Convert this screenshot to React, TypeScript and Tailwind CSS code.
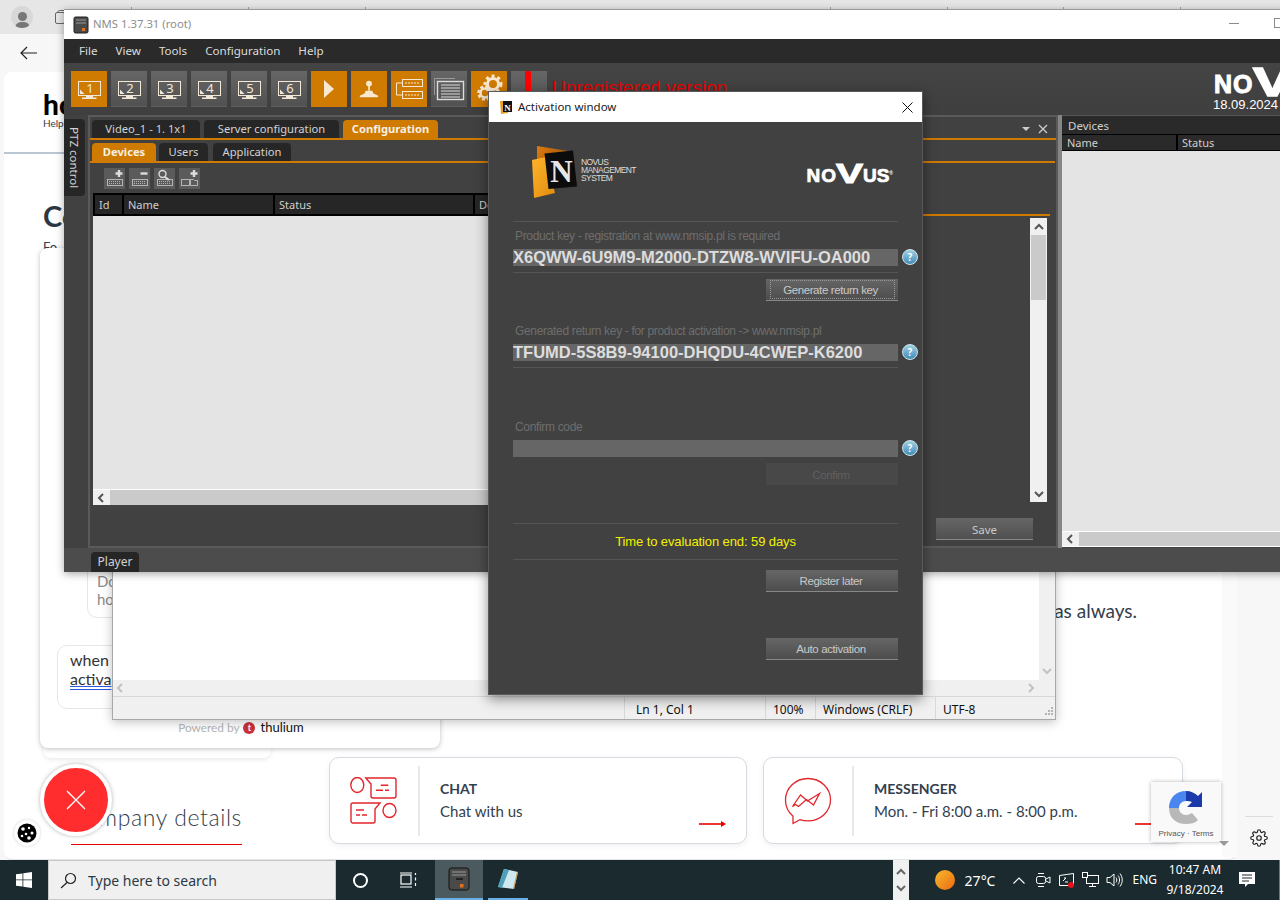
import React from "react";

const QT = "font-['Noto_Sans','Open_Sans',sans-serif]";
const ARIAL = "font-['Liberation_Sans',Arial,sans-serif]";
const PAGE = "font-['Lato','Open_Sans',sans-serif]";

function MonitorIcon({ n }: { n: number }) {
  return (
    <svg width="36" height="36" viewBox="0 0 36 36">
      <rect x="7.5" y="10.5" width="22" height="14" fill="none" stroke="#f2e8d8" strokeWidth="1" />
      <path d="M9 23V18.5L13.5 23Z" fill="#f2e8d8" />
      <path d="M15 25h7v1.500h3.500V28H11v-1.500h4Z" fill="#f2e8d8" />
      <text x="19" y="22" fontSize="13" textAnchor="middle" fill="#f2e8d8" fontFamily="Noto Sans, sans-serif">{n}</text>
    </svg>
  );
}

function ToolBtn({ orange, children }: { orange?: boolean; children: React.ReactNode }) {
  return (
    <div
      className={
        orange
          ? "w-9 h-9 shrink-0 bg-[#cf7a00] flex items-center justify-center"
          : "w-9 h-9 shrink-0 bg-linear-to-b from-[#666666] to-[#515151] border-b border-[#5d5d5d] flex items-center justify-center"
      }
    >
      {children}
    </div>
  );
}

function NovusLogo({ big }: { big?: boolean }) {
  const word = big
    ? "text-[25px] leading-[22px] mb-[2px] [-webkit-text-stroke:1px_white]"
    : "text-[19px] leading-[15px] mb-[2px] [-webkit-text-stroke:0.7px_white]";
  const v = big
    ? "text-[40px] leading-[30px] inline-block scale-x-[1.45] origin-left w-[38px] -ml-[1px] [-webkit-text-stroke:1.5px_white]"
    : "text-[28px] leading-[22px] inline-block scale-x-[1.45] origin-left w-[27px] -ml-[1px] [-webkit-text-stroke:1px_white]";
  return (
    <div className={`flex items-end font-bold text-white ${ARIAL}`}>
      <span className={`${word} tracking-[1px]`}>NO</span>
      <span className={v}>V</span>
      {!big && <span className={word}>US</span>}
      {!big && <span className="text-[5px] leading-[20px] self-start">®</span>}
    </div>
  );
}

function Tab({ active, w, children }: { active?: boolean; w: string; children: React.ReactNode }) {
  return (
    <div
      className={`${w} h-[18px] rounded-t-[4px] flex items-center justify-center text-[11.2px] leading-none ${QT} ${
        active ? "bg-[#cf7a00] text-[#f6f0e4] font-bold" : "bg-[#262626] text-[#d2d2d2]"
      }`}
    >
      {children}
    </div>
  );
}

function SmallTool({ kind }: { kind: "add" | "remove" | "search" | "folder" }) {
  return (
    <div className="w-[21px] h-[21px] bg-[#5b5b5b] flex items-center justify-center">
      <svg width="21" height="21" viewBox="0 0 21 21" fill="none" stroke="#b4b4b4">
        {kind === "folder" ? (
          <>
            <rect x="2.5" y="11.5" width="8" height="6" />
            <path d="M11.5 17.5v-6h3l1 1h3v5Z" />
            <path d="M15 2v7M11.5 5.5h7" strokeWidth="2.4" stroke="#dddddd" />
          </>
        ) : (
          <>
            <rect x="3.5" y="11.5" width="15" height="6" />
            <path d="M5 13.5h12M5 15.5h12" strokeDasharray="1 1" />
            {kind === "add" && <path d="M15 2v7M11.5 5.5h7" strokeWidth="2.4" stroke="#dddddd" />}
            {kind === "remove" && <path d="M11.5 5.5h7" strokeWidth="2.4" stroke="#dddddd" />}
            {kind === "search" && (
              <>
                <circle cx="8.5" cy="6" r="3.5" strokeWidth="1.4" stroke="#dddddd" />
                <path d="M11 9l4 3" strokeWidth="2" stroke="#dddddd" />
              </>
            )}
          </>
        )}
      </svg>
    </div>
  );
}

function Chevron({ d, color = "#555555" }: { d: "l" | "r" | "u" | "d"; color?: string }) {
  const p = { l: "M7 2L3 6l4 4", r: "M4 2l4 4-4 4", u: "M2 8l4-4 4 4", d: "M2 4l4 4 4-4" }[d];
  return (
    <svg width="12" height="12" viewBox="0 0 12 12" fill="none" stroke={color} strokeWidth="2">
      <path d={p} />
    </svg>
  );
}

function HeadCell({ w, children }: { w: string; children?: React.ReactNode }) {
  return <div className={`${w} h-full shrink-0 border-r-2 border-black pl-1 pt-[2px] flex items-center text-[11px] text-[#cfcfcf] ${QT}`}>{children}</div>;
}

function Help() {
  return (
    <div className="absolute -right-[20px] top-[0px] w-4 h-4 rounded-full bg-linear-to-b from-[#9dd0e6] to-[#3f8db8] border border-[#cfe6f0] flex items-center justify-center text-white text-[10px] font-bold leading-none">
      ?
    </div>
  );
}

function KeyField({ value }: { value?: string }) {
  return (
    <div className="relative h-[17px] bg-[#666666] flex items-center">
      <span className={`${ARIAL} font-bold text-[16.5px] leading-none text-[#dddddd] whitespace-nowrap`}>{value}</span>
      <Help />
    </div>
  );
}

function DlgBtn({ children, dim, dotted }: { children: React.ReactNode; dim?: boolean; dotted?: boolean }) {
  return (
    <div
      className={`ml-auto w-[132px] h-[22px] flex items-center justify-center text-[11.5px] tracking-[-0.4px] ${dotted ? "" : "pt-[3px] pr-[2px]"} ${ARIAL} ${
        dim
          ? "bg-[#484848] text-[#5f5f5f]"
          : "bg-linear-to-b from-[#666666] to-[#4d4d4d] border-b border-[#888888] text-[#c9c9c9]"
      }`}
    >
      <div className={dotted ? "w-[125px] h-[19px] pt-[3px] pr-[3px] border border-dotted border-[#999999] flex items-center justify-center" : ""}>{children}</div>
    </div>
  );
}

function Sep({ className = "" }: { className?: string }) {
  return <div className={`h-px bg-[#555555] ${className}`} />;
}

function ChatIcon() {
  return (
    <svg width="48" height="48" viewBox="0 0 48 48" fill="none" stroke="#e2262b" strokeWidth="1.4">
      <ellipse cx="7.300" cy="8" rx="6.500" ry="7.500" />
      <path d="M5 7h.01M9.500 7h.01" strokeWidth="2" />
      <path d="M15.700 1H44a2 2 0 0 1 2 2V19a2 2 0 0 1-2 2H23a2 2 0 0 1-2-2V7Z" />
      <path d="M30.700 8.300h7.600M26 13.300h7M35 13.300h4" />
      <path d="M3 26H30L25 32V44a2 2 0 0 1-2 2H3a2 2 0 0 1-2-2V28a2 2 0 0 1 2-2Z" />
      <path d="M6 33h8M6 38h4M12 38h5" />
      <ellipse cx="39.500" cy="33.500" rx="6.500" ry="7" />
      <path d="M37 33h.01M42 33h.01" strokeWidth="2" />
    </svg>
  );
}

function MessengerIcon() {
  return (
    <svg width="48" height="48" viewBox="0 0 48 48" fill="none" stroke="#e2262b" strokeWidth="1.3">
      <path d="M24 1.500C11.500 1.500 1.500 11 1.500 23c0 6.500 2.800 12.200 7.500 16.200V46.500l7-3.800c2.500.8 5 1.200 8 1.200 12.500 0 22.500-9.500 22.500-21.200S36.500 1.500 24 1.500Z" />
      <path d="M8.500 29.500L16.500 18l7 6 12-7.500-6 11.500-7-5.500-8 7-3-2Z" />
    </svg>
  );
}

function RedArrow() {
  return (
    <svg width="28" height="8" viewBox="0 0 28 8" className="shrink-0">
      <path d="M0 4h23" stroke="#e60000" strokeWidth="1.6" />
      <path d="M22 1l5 3-5 3Z" fill="#e60000" />
    </svg>
  );
}

function ContactCard({ icon, title, sub, w }: { icon: React.ReactNode; title: string; sub: string; w: string }) {
  return (
    <div className={`${w} h-[87px] shrink-0 bg-white border border-[#d5dbe1] rounded-[10px] shadow-[0_2px_6px_rgba(0,0,0,0.06)] flex items-center relative`}>
      <div className="w-[88px] flex justify-center">{icon}</div>
      <div className="w-[2px] h-[70px] bg-[#e4e9ee]" />
      <div className={`pl-[20px] mb-[2px] ${PAGE} text-[#34404d]`}>
        <div className="text-[14px] font-bold leading-[18px]">{title}</div>
        <div className="text-[15px] leading-[18px] mt-[4px] whitespace-nowrap">{sub}</div>
      </div>
      <div className="absolute right-[19px] bottom-[15px]">
        <RedArrow />
      </div>
    </div>
  );
}

function Page() {
  const ticks = [131, 248, 365, 830, 947, 1063, 1180];
  return (
    <div className="w-full h-[860px] flex flex-col bg-[#f7f7f7]">
      <div className="h-[34px] bg-[#e6e6e6] flex items-center pl-[11px] gap-[21px] shrink-0 relative">
        <div className="w-[22px] h-[22px] rounded-full bg-[#d8d8d8] flex flex-col items-center justify-end overflow-hidden">
          <div className="w-[9px] h-[9px] rounded-full bg-[#777777] mb-[1px]" />
          <div className="w-[15px] h-[6px] rounded-t-full bg-[#777777]" />
        </div>
        <svg width="16" height="16" viewBox="0 0 16 16" fill="none" stroke="#666666">
          <rect x="1.500" y="3.500" width="9" height="11" rx="1.500" />
          <path d="M4 3c0-1 .5-1.500 1.500-1.500h8v11" />
        </svg>
        {ticks.map((x) => (
          <div key={x} className="absolute top-[7px] w-px h-[2px] bg-[#a0a0a0]" style={{ left: x }} />
        ))}
      </div>
      <div className="h-[38px] flex items-center pl-[20px] shrink-0">
        <svg width="17" height="14" viewBox="0 0 17 14" fill="none" stroke="#222222" strokeWidth="1.2">
          <path d="M17 7H1M7 1L1 7l6 6" />
        </svg>
      </div>
      <div className="flex-1 flex min-h-0">
        <div className="ml-[4px] w-[1233px] bg-white rounded-[8px] border-r border-b border-[#e4e4e4] flex flex-col">
          <div className="h-[82px] shrink-0 border-b-2 border-[#bac6d2] pl-[39px] pt-[18px] text-black">
            <div className={`${PAGE} text-[28px] font-black leading-[28px]`}>ho</div>
            <div className={`${PAGE} text-[10px] leading-[10px] text-[#34404d]`}>Help</div>
          </div>
          <div className={`pl-[39px] pt-[42px] ${PAGE} text-[#2c3744] text-[29px] font-bold leading-[40px]`}>Co</div>
          <div className={`pl-[39px] mt-[3px] text-[13px] ${PAGE} text-[#34404d] leading-[16px]`}>Fo</div>
          <div className={`mt-[345px] text-right pr-[99px] text-[19px] leading-[22px] ${PAGE} text-[#34404d]`}>as always.</div>
          <div className="flex items-start mt-[135px] pl-[67px]">
            <div className="w-[258px] h-[88px] flex flex-col items-end justify-end">
              <div className={`w-[171px] flex justify-end whitespace-nowrap border-b border-[#e60000] pb-[11px] ${PAGE} font-light tracking-[0.6px] text-[23px] leading-[32px] text-[#34404d] mr-[87px]`}>
                Company details
              </div>
            </div>
            <ContactCard w="w-[418px]" icon={<ChatIcon />} title="CHAT" sub="Chat with us" />
            <div className="w-[16px] shrink-0" />
            <ContactCard w="w-[420px]" icon={<MessengerIcon />} title="MESSENGER" sub="Mon. - Fri 8:00 a.m. - 8:00 p.m." />
          </div>
        </div>
        <div className="flex-1 flex flex-col items-center justify-end pb-[13px]">
          <div className="w-[28px] h-px bg-[#dddddd] mb-[12px]" />
          <svg width="18" height="18" viewBox="0 0 24 24" fill="none" stroke="#222222" strokeWidth="1.6">
            <circle cx="12" cy="12" r="3" />
            <path d="M19.400 15a1.650 1.650 0 0 0 .33 1.820l.06.06a2 2 0 1 1-2.830 2.830l-.06-.06a1.650 1.650 0 0 0-2.820 1.170V21a2 2 0 1 1-4 0v-.09A1.650 1.650 0 0 0 7.270 19.700l-.06.06a2 2 0 1 1-2.830-2.830l.06-.06A1.650 1.650 0 0 0 3.260 14H3a2 2 0 1 1 0-4h.09A1.650 1.650 0 0 0 4.300 7.270l-.06-.06a2 2 0 1 1 2.830-2.830l.06.06A1.650 1.650 0 0 0 10 3.260V3a2 2 0 1 1 4 0v.09a1.650 1.650 0 0 0 2.820 1.170l.06-.06a2 2 0 1 1 2.830 2.830l-.06.06A1.650 1.650 0 0 0 20.740 10H21a2 2 0 1 1 0 4h-.09a1.650 1.650 0 0 0-1.510 1Z" />
          </svg>
        </div>
      </div>
    </div>
  );
}

function ChatWidget() {
  return (
    <>
      <div className="absolute left-[43px] top-[700px] w-[228px] h-[58px] bg-white rounded-b-[8px] shadow-[0_2px_4px_rgba(0,0,0,0.08)]" />
      <div className={`absolute left-[40px] top-[248px] w-[400px] h-[500px] bg-white rounded-[8px] shadow-[0_1px_5px_rgba(0,0,0,0.25)] flex flex-col items-start pl-[17px] ${PAGE}`}>
        <div className="mt-[300px] ml-[30px] w-[200px] h-[70px] border border-[#e6e6e6] rounded-[10px] flex flex-col justify-end pl-[9px] pb-[9px] text-[15px] leading-[18px] text-[#8a8a8a]">
          <div>Do</div>
          <div>ho</div>
        </div>
        <div className="mt-[27px] w-[300px] h-[64px] border border-[#e6e6e6] rounded-[10px] pl-[12px] pt-[4px] text-[16px] leading-[19px] text-[#333333]">
          <div>when</div>
          <div className="underline decoration-double decoration-[#2a56e0]">activa</div>
        </div>
        <div className="mt-[9px] self-center flex items-center gap-[4px] -ml-[15px]">
          <span className="text-[11.8px] text-[#b5b5b5]">Powered by</span>
          <span className="w-3 h-3 rounded-full bg-[#c9303a] text-white text-[9px] font-bold flex items-center justify-center">t</span>
          <span className="ml-[1px] text-[13px] text-[#111111]">thulium</span>
        </div>
      </div>
      <div className="absolute left-[40px] top-[764px] w-[72px] h-[72px] rounded-full bg-[#ff2d2d] border-[4px] border-white shadow-[0_0_4px_rgba(0,0,0,0.3)] flex items-center justify-center">
        <svg width="20" height="20" viewBox="0 0 20 20" stroke="white" strokeWidth="1.400">
          <path d="M1 1l18 18M19 1L1 19" />
        </svg>
      </div>
      <div className="absolute left-[14px] top-[820px] w-[26px] h-[26px] rounded-full bg-white shadow-[0_0_3px_rgba(0,0,0,0.2)] flex items-center justify-center">
        <svg width="20" height="20" viewBox="0 0 20 20">
          <circle cx="10" cy="10" r="9.500" fill="#000000" />
          <circle cx="6" cy="6" r="1.800" fill="white" />
          <circle cx="12" cy="5" r="1.200" fill="white" />
          <circle cx="15" cy="10" r="1.500" fill="white" />
          <circle cx="9" cy="11" r="1.300" fill="white" />
          <circle cx="5" cy="13" r="1.300" fill="white" />
          <circle cx="12" cy="15" r="1.800" fill="white" />
        </svg>
      </div>
      <div className={`absolute left-[1151px] top-[782px] w-[70px] h-[60px] bg-[#f9f9f9] shadow-[0_0_4px_rgba(0,0,0,0.3)] flex flex-col items-center ${ARIAL}`}>
        <svg width="38" height="38" viewBox="0 0 38 38" className="mt-[6px] shrink-0">
          <path d="M2 20C2 10 9 3 19 3v10c-4 0-7 3-7 7H2Z" fill="#4a85f0" />
          <path d="M19 3c5 0 9 2 12 5l4-4v15H20l5-5c-2-1-4-1-6-1V3Z" fill="#1c3aa9" />
          <path d="M2 20h10c0 4 3 7 7 7 2 0 4-1 6-2l6 7c-3 3-7 4-12 4C9 36 2 30 2 20Z" fill="#b8b8b8" />
        </svg>
        <div className="text-[8px] leading-[10px] text-[#555555] whitespace-nowrap mt-[3px]">Privacy · Terms</div>
      </div>
      <div className="absolute left-[1219px] top-[841px] w-0 h-0 border-l-[5px] border-r-[5px] border-t-[5px] border-l-transparent border-r-transparent border-t-[#999999]" />
    </>
  );
}

function Notepad() {
  const seg = "h-full border-l border-[#d8d8d8] pt-[4px] flex items-center shrink-0";
  return (
    <div className={`absolute left-[112px] top-[480px] w-[944px] h-[240px] bg-white border border-[#a8a8a8] shadow-[0_2px_10px_rgba(0,0,0,0.25)] flex flex-col text-[12px] text-[#111111] ${QT}`}>
      <div className="flex-1 flex min-h-0">
        <div className="flex-1" />
        <div className="w-4 bg-[#f0f0f0] flex flex-col justify-end items-center pb-[3px]">
          <Chevron d="d" color="#c2c2c2" />
        </div>
      </div>
      <div className="h-4 bg-[#f0f0f0] flex items-center justify-between pl-[2px] pr-[18px] shrink-0">
        <Chevron d="l" color="#c2c2c2" />
        <Chevron d="r" color="#c2c2c2" />
      </div>
      <div className="h-[23px] bg-[#f0f0f0] border-t border-[#d8d8d8] flex items-center shrink-0 pl-[511px] relative">
        <div className={`${seg} w-[141px] pl-[11px]`}>Ln 1, Col 1</div>
        <div className={`${seg} w-[50px] pl-[7px]`}>100%</div>
        <div className={`${seg} w-[120px] pl-[7px]`}>Windows (CRLF)</div>
        <div className={`${seg} pl-[7px]`}>UTF-8</div>
        <svg width="12" height="12" viewBox="0 0 12 12" className="absolute right-[1px] bottom-[1px]" fill="#b5b5b5">
          <rect x="9" y="1" width="2" height="2" />
          <rect x="6" y="4" width="2" height="2" />
          <rect x="9" y="4" width="2" height="2" />
          <rect x="3" y="7" width="2" height="2" />
          <rect x="6" y="7" width="2" height="2" />
          <rect x="9" y="7" width="2" height="2" />
        </svg>
      </div>
    </div>
  );
}

function NmsWindow() {
  const menuItems = ["File", "View", "Tools", "Configuration", "Help"];
  return (
    <div className="absolute left-[64px] top-[9px] w-[1240px] h-[563px] flex flex-col border-t border-[#9a9a9a] shadow-[0_2px_8px_rgba(0,0,0,0.35)] overflow-hidden bg-[#414141]">
      <div className="h-[29px] shrink-0 bg-white flex items-center relative pl-[9px]">
        <svg width="16" height="18" viewBox="0 0 16 18">
          <rect x="1" y="1" width="14" height="16" rx="1.500" fill="#4a4a4a" stroke="#1f1f1f" />
          <path d="M3 4h10M3 7h10" stroke="#9a9a9a" />
          <rect x="9" y="12" width="3" height="3" fill="#e8701a" />
        </svg>
        <span className={`ml-[4px] text-[11.3px] text-[#8d8d8d] ${QT}`}>NMS 1.37.31 (root)</span>
        <div className="absolute left-[1165px] top-[13px] w-[10px] h-px bg-[#8a8a8a]" />
        <div className="absolute left-[1210px] top-[8px] w-[10px] h-[10px] border border-[#8a8a8a]" />
      </div>
      <div className={`h-[24px] shrink-0 bg-[#2a2a2a] flex items-center pl-[15px] gap-[18px] text-[11.6px] text-[#dcdcdc] ${QT}`}>
        {menuItems.map((m) => (
          <span key={m}>{m}</span>
        ))}
      </div>
      <div className="h-[52px] shrink-0 bg-linear-to-b from-[#444444] to-[#3f3f3f] flex pl-[7px] pt-[8px] gap-[4px] relative">
        {[1, 2, 3, 4, 5, 6].map((n) => (
          <ToolBtn key={n} orange={n === 1}>
            <MonitorIcon n={n} />
          </ToolBtn>
        ))}
        <ToolBtn orange>
          <svg width="12" height="18" viewBox="0 0 12 18">
            <path d="M1 0l10 9-10 9Z" fill="#f8e8d0" />
          </svg>
        </ToolBtn>
        <ToolBtn orange>
          <svg width="20" height="20" viewBox="0 0 24 24" fill="#f8e8d0">
            <circle cx="12" cy="5.500" r="3.500" />
            <rect x="11" y="8" width="2" height="6" />
            <path d="M8 14h8l1 3 6 3v2H1v-2l6-3Z" />
          </svg>
        </ToolBtn>
        <ToolBtn orange>
          <svg width="28" height="24" viewBox="0 0 28 24" fill="none" stroke="#f8e8d0">
            <rect x="7.500" y="2.500" width="20" height="7" />
            <rect x="7.500" y="14.500" width="20" height="7" />
            <path d="M7.500 6H1.500V18H7.500" />
            <path d="M10 6h15M10 18h15" strokeDasharray="2 1" />
          </svg>
        </ToolBtn>
        <ToolBtn>
          <svg width="32" height="26" viewBox="0 0 32 26" fill="none" stroke="#dcdcdc">
            <path d="M1.500 19V2.500H22" stroke="#9a9a9a" />
            <rect x="4.500" y="5.500" width="26" height="18" strokeWidth="1.400" />
            <path d="M8 9h19M8 12h19M8 15h19M8 18h19M8 21h19" />
          </svg>
        </ToolBtn>
        <ToolBtn orange>
          <svg width="36" height="36" viewBox="0 0 36 36" fill="none" stroke="#f8e8d0">
            <circle cx="22" cy="13" r="8" strokeWidth="3" strokeDasharray="3 3" />
            <circle cx="22" cy="13" r="5.500" strokeWidth="3" />
            <circle cx="14" cy="22" r="6.500" strokeWidth="2.500" strokeDasharray="3 2" />
            <circle cx="14" cy="22" r="4.500" strokeWidth="2.500" />
          </svg>
        </ToolBtn>
        <ToolBtn>
          <div className="w-[6px] h-[30px] bg-[#ff0000] rounded-t-[2px] -mt-[6px] mr-[3px]" />
        </ToolBtn>
        <span className={`self-start ml-[1px] mt-[5px] text-[19px] leading-[24px] text-[#e50000] ${ARIAL}`}>Unregistered version</span>
        <div className="absolute left-[1150px] top-[4px] flex flex-col items-start">
          <NovusLogo big />
          <div className={`text-[13px] leading-[15px] text-white -ml-[1px] ${ARIAL}`}>18.09.2024</div>
        </div>
      </div>
      <div className="h-[433px] shrink-0 flex">
        <div className="w-[24px] shrink-0 pt-[4px]">
          <div className="w-[21px] h-[77px] bg-[#262626] rounded-r-[4px] flex items-center justify-center">
            <span className={`text-[11.5px] text-[#d2d2d2] whitespace-nowrap rotate-90 ${QT}`}>PTZ control</span>
          </div>
        </div>
        <div className="w-[970px] shrink-0 border-2 border-[#5a5a5a] flex flex-col">
          <div className="flex items-center gap-[4px] pl-[2px] pt-[3px]">
            <Tab w="w-[108px]">Video_1 - 1. 1x1</Tab>
            <Tab w="w-[135px]">Server configuration</Tab>
            <Tab w="w-[95px]" active>Configuration</Tab>
            <div className="ml-auto flex items-center gap-[8px] pr-[8px]">
              <div className="w-0 h-0 border-l-[4px] border-r-[4px] border-t-[4px] border-l-transparent border-r-transparent border-t-[#cccccc]" />
              <svg width="10" height="10" viewBox="0 0 10 10" stroke="#cccccc" strokeWidth="1.300">
                <path d="M1 1l8 8M9 1L1 9" />
              </svg>
            </div>
          </div>
          <div className="h-[2px] bg-[#cf7a00] shrink-0" />
          <div className="flex gap-[3px] pl-[2px] pt-[3px]">
            <Tab w="w-[64px]" active>Devices</Tab>
            <Tab w="w-[49px]">Users</Tab>
            <div className="ml-[2px]">
              <Tab w="w-[78px]">Application</Tab>
            </div>
          </div>
          <div className="h-[2px] bg-[#cf7a00] shrink-0 mr-[1px]" />
          <div className="flex gap-[4px] pl-[14px] pt-[5px]">
            <SmallTool kind="add" />
            <SmallTool kind="remove" />
            <SmallTool kind="search" />
            <SmallTool kind="folder" />
          </div>
          <div className="flex pl-[3px] pt-[4px]">
            <div className="w-[395px] h-[312px] shrink-0 flex flex-col">
              <div className="h-[23px] shrink-0 bg-[#262626] border-y-2 border-black border-l-2 flex">
                <HeadCell w="w-[29px]">Id</HeadCell>
                <HeadCell w="w-[151px]">Name</HeadCell>
                <HeadCell w="w-[200px]">Status</HeadCell>
                <HeadCell w="w-[40px]">De</HeadCell>
              </div>
              <div className="flex-1 bg-[#e4e4e4]" />
              <div className="h-[16px] shrink-0 bg-[#f0f0f0] border-t border-white flex">
                <div className="w-[17px] flex items-center justify-center">
                  <Chevron d="l" />
                </div>
                <div className="flex-1 bg-[#cacaca]" />
              </div>
            </div>
            <div className="flex-1 flex flex-col items-end pt-[21px] pr-[6px]">
              <div className="h-[2px] w-full bg-[#cf7a00]" />
              <div className="mt-[2px] mr-[3px] w-[17px] h-[284px] bg-[#f0f0f0] flex flex-col items-center justify-between">
                <div className="flex flex-col w-full items-center">
                  <div className="h-[17px] flex items-center">
                    <Chevron d="u" />
                  </div>
                  <div className="w-[15px] h-[65px] bg-[#cacaca]" />
                </div>
                <div className="h-[17px] flex items-center">
                  <Chevron d="d" />
                </div>
              </div>
            </div>
          </div>
          <div className="mt-[13px] pr-[23px] flex justify-end">
            <div className={`w-[97px] h-[22px] pt-[2px] bg-linear-to-b from-[#666666] to-[#505050] border-b border-[#888888] flex items-center justify-center text-[11.5px] text-[#c9c9c9] ${QT}`}>Save</div>
          </div>
        </div>
        <div className="w-[4px] shrink-0 bg-[#868686]" />
        <div className="flex-1 flex flex-col border-t border-[#555555] pb-[1px]">
          <div className={`h-[18px] shrink-0 bg-[#2a2a2a] pl-[6px] pt-[2px] flex items-center text-[11.5px] text-[#cfcfcf] ${QT}`}>Devices</div>
          <div className="h-[17px] shrink-0 bg-[#2a2a2a] border-y border-black flex">
            <div className={`w-[116px] border-r-2 border-black pl-[5px] pt-[2px] flex items-center text-[11px] text-[#cfcfcf] ${QT}`}>Name</div>
            <div className={`pl-[4px] pt-[2px] flex items-center text-[11px] text-[#cfcfcf] ${QT}`}>Status</div>
          </div>
          <div className="flex-1 bg-[#e4e4e4]" />
          <div className="h-[16px] shrink-0 bg-[#f0f0f0] border-y border-white flex">
            <div className="w-[17px] flex items-center justify-center">
              <Chevron d="l" />
            </div>
            <div className="flex-1 bg-[#cacaca]" />
          </div>
        </div>
      </div>
      <div className="h-[24px] shrink-0 bg-[#4c4c4c] pl-[27px] flex items-end">
        <div className={`w-[48px] h-[20px] bg-[#262626] rounded-t-[4px] flex items-center justify-center text-[12px] text-[#d2d2d2] ${QT}`}>Player</div>
      </div>
    </div>
  );
}

function Dialog() {
  return (
    <div className="absolute left-[488px] top-[91px] w-[435px] h-[604px] border border-[#5a5a5a] bg-[#414141] shadow-[0_4px_12px_rgba(0,0,0,0.45)] flex flex-col">
      <div className={`h-[30px] shrink-0 bg-white flex items-center pl-[10px] text-[11.5px] text-[#1a1a1a] ${QT}`}>
        <svg width="14" height="16" viewBox="0 0 14 16">
          <path d="M1 2l8 0 0 12-7 1Z" fill="#e8a020" />
          <rect x="4" y="2" width="9" height="11" fill="#111111" />
          <text x="8.500" y="11.500" fontSize="9" fontWeight="bold" fill="white" textAnchor="middle" fontFamily="Liberation Serif, serif">N</text>
        </svg>
        <span className="ml-[5px]">Activation window</span>
        <svg width="11" height="11" viewBox="0 0 11 11" stroke="#111111" className="ml-auto mr-[9px]">
          <path d="M.5.500l10 10M10.500.500l-10 10" />
        </svg>
      </div>
      <div className="flex-1 px-[24px] flex flex-col">
        <div className="h-[99px] shrink-0 flex relative">
          <div className="ml-[19px] mt-[24px] flex">
            <svg width="50" height="54" viewBox="0 0 50 54">
              <defs>
                <linearGradient id="lgo" x1="0" y1="0" x2="1" y2="1">
                  <stop offset="0" stopColor="#e07a10" />
                  <stop offset="1" stopColor="#7a4708" />
                </linearGradient>
                <linearGradient id="lgy" x1="0" y1="0" x2="1" y2="1">
                  <stop offset="0" stopColor="#ffb52a" />
                  <stop offset="1" stopColor="#e08a10" />
                </linearGradient>
              </defs>
              <path d="M5 0l31 5v35H5Z" fill="url(#lgo)" />
              <path d="M0 14l14-3 9 36-21 5Z" fill="url(#lgy)" />
              <path d="M12.500 7.500L41 4.500 45 40.500 16.500 43Z" fill="#0c0c0c" />
              <text x="29.500" y="36" fontSize="31" fontWeight="bold" textAnchor="middle" fill="#e6e6e6" fontFamily="Liberation Serif, serif">N</text>
            </svg>
            <div className={`ml-[-1px] mt-[12px] text-[8.5px] leading-[8px] tracking-[-0.6px] text-[#dddddd] ${ARIAL}`}>
              <div>NOVUS</div>
              <div>MANAGEMENT</div>
              <div>SYSTEM</div>
            </div>
          </div>
          <div className="absolute right-[5px] top-[41px]">
            <NovusLogo />
          </div>
        </div>
        <Sep />
        <div className={`mt-[7px] pl-[2px] text-[12px] leading-[14px] tracking-[-0.33px] text-[#6e6e6e] ${ARIAL}`}>Product key - registration at www.nmsip.pl is required</div>
        <div className="mt-[6px]">
          <KeyField value="X6QWW-6U9M9-M2000-DTZW8-WVIFU-OA000" />
        </div>
        <Sep className="mt-[6px]" />
        <div className="mt-[6px]">
          <DlgBtn dotted>Generate return key</DlgBtn>
        </div>
        <div className={`mt-[23px] pl-[2px] text-[12px] leading-[14px] tracking-[-0.33px] text-[#6e6e6e] ${ARIAL}`}>Generated return key - for product activation -&gt; www.nmsip.pl</div>
        <div className="mt-[6px]">
          <KeyField value="TFUMD-5S8B9-94100-DHQDU-4CWEP-K6200" />
        </div>
        <Sep className="mt-[6px]" />
        <div className={`mt-[52px] pl-[2px] text-[12px] leading-[14px] tracking-[-0.33px] text-[#6e6e6e] ${ARIAL}`}>Confirm code</div>
        <div className="mt-[6px]">
          <KeyField />
        </div>
        <div className="mt-[6px]">
          <DlgBtn dim>Confirm</DlgBtn>
        </div>
        <Sep className="mt-[38px]" />
        <div className={`h-[35px] flex items-center justify-center text-[13px] tracking-[-0.1px] text-[#f2f200] ${ARIAL}`}>Time to evaluation end: 59 days</div>
        <Sep />
        <div className="mt-[10px]">
          <DlgBtn>Register later</DlgBtn>
        </div>
        <div className="mt-[46px]">
          <DlgBtn>Auto activation</DlgBtn>
        </div>
      </div>
    </div>
  );
}

function Taskbar() {
  const tray = `text-[12px] leading-[20px] text-white ${QT}`;
  return (
    <div className="absolute left-0 top-[860px] w-[1280px] h-[40px] bg-[#1a2a2f] flex items-stretch">
      <div className="w-[48px] flex items-center justify-center">
        <svg width="16" height="16" viewBox="0 0 16 16" fill="white">
          <path d="M0 2.300L6.500 1.400V7.500H0ZM7.300 1.300L16 0V7.500H7.300ZM0 8.300H6.500V14.600L0 13.700ZM7.300 8.300H16V16L7.300 14.700Z" />
        </svg>
      </div>
      <div className={`w-[288px] bg-[#f0f0f0] border border-[#c8c8c8] flex items-center pl-[11px] text-[14px] text-[#2a3a44] ${QT}`}>
        <svg width="17" height="17" viewBox="0 0 17 17" fill="none" stroke="#222222" strokeWidth="1.200">
          <circle cx="10.500" cy="6.500" r="5" />
          <path d="M7 10.500L1 16" />
        </svg>
        <span className="ml-[11px]">Type here to search</span>
      </div>
      <div className="w-[48px] flex items-center justify-center">
        <div className="w-[15px] h-[15px] rounded-full border-2 border-white" />
      </div>
      <div className="w-[48px] flex items-center justify-center">
        <svg width="17" height="16" viewBox="0 0 17 16" fill="none" stroke="white" strokeWidth="1.200">
          <rect x="1" y="3" width="10" height="9" />
          <path d="M0 1h12M0 15h12M15.500 1v2M15.500 5.500v3M15.500 11v3" />
        </svg>
      </div>
      <div className="w-[48px] ml-[3px] bg-[#4a5a5e] border-b-[2px] border-[#6ab0e4] flex items-center justify-center">
        <svg width="22" height="24" viewBox="0 0 22 24">
          <rect x="1" y="1" width="20" height="22" rx="2.500" fill="#4a4a4a" stroke="#111111" />
          <path d="M4 5h14M4 8h14" stroke="#9a9a9a" />
          <rect x="8" y="11" width="7" height="2" fill="#222222" />
          <rect x="12" y="17" width="3.500" height="3.500" fill="#e8701a" />
        </svg>
      </div>
      <div className="w-[40px] ml-[5px] border-b-[2px] border-[#6ab0e4] flex items-center justify-center">
        <svg width="24" height="24" viewBox="0 0 24 24">
          <path d="M8 2l14 3-4 17-16-2Z" fill="#cfe8f0" />
          <path d="M8 2l5 1L6 20.700 2 20Z" fill="#4f9fb8" />
          <path d="M22 5l-4 17-1-.2L21 5Z" fill="#c9924a" />
        </svg>
      </div>
      <div className="flex-1" />
      <div className="w-[16px] bg-[#f0f0f0] flex flex-col items-center justify-center gap-[4px]">
        <Chevron d="u" color="#666666" />
        <Chevron d="d" color="#666666" />
      </div>
      <div className="w-[26px]" />
      <div className="flex items-center">
        <div className="w-5 h-5 rounded-full bg-linear-to-br from-[#f5b82e] to-[#ea6a10]" />
      </div>
      <div className={`ml-[10px] flex items-center text-[14px] text-white ${QT}`}>27°C</div>
      <div className="ml-[18px] flex items-center">
        <svg width="12" height="7" viewBox="0 0 12 7" fill="none" stroke="white" strokeWidth="1.100">
          <path d="M.5 6.500L6 1l5.500 5.500" />
        </svg>
      </div>
      <div className="ml-[10px] flex items-center gap-[7px] relative">
        <svg width="16" height="16" viewBox="0 0 16 16" fill="none" stroke="white">
          <rect x="1.500" y="4.500" width="9" height="7" rx="2" />
          <path d="M11 7l4-2v6l-4-2" />
          <path d="M3 1.500h6M3 14.500h6" />
        </svg>
        <svg width="17" height="16" viewBox="0 0 17 16" fill="none" stroke="white">
          <path d="M1.500 3.500L15.500 1.500V13.500H1.500Z" />
          <path d="M5 9l3-3M8 6h-2M7 10h3" />
          <circle cx="13" cy="13" r="3" fill="#e8101a" stroke="none" />
        </svg>
        <svg width="17" height="16" viewBox="0 0 17 16" fill="none" stroke="white">
          <rect x="4.500" y="3.500" width="12" height="8" />
          <rect x=".5" y=".5" width="5" height="5" fill="#1a2a2f" />
          <path d="M10.500 11.500v3M7 14.500h7" />
        </svg>
        <svg width="17" height="16" viewBox="0 0 17 16" fill="none" stroke="white">
          <path d="M1 5.500h3l4-3.500v12l-4-3.500H1Z" />
          <path d="M10 5.500c1 1.500 1 3.500 0 5M12 3.500c2 2.500 2 6.500 0 9M14 1.500c3 4 3 9 0 13" />
        </svg>
      </div>
      <div className={`ml-[9px] flex items-center ${tray}`}>ENG</div>
      <div className={`ml-[6px] w-[64px] flex flex-col justify-center items-center ${tray}`}>
        <div className="whitespace-nowrap">10:47 AM</div>
        <div className="whitespace-nowrap">9/18/2024</div>
      </div>
      <div className="ml-[12px] flex items-center">
        <svg width="16" height="16" viewBox="0 0 16 16" fill="white">
          <path d="M0 0h16v12H9l-3 3v-3H0Z" />
          <path d="M3 3h10M3 6h10M3 9h7" stroke="#1a2a2f" />
        </svg>
      </div>
      <div className="ml-[24px] w-px bg-[#6a7a7e]" />
    </div>
  );
}

export default function App() {
  return (
    <div className="relative w-[1280px] h-[900px] overflow-hidden bg-white">
      <Page />
      <div className="absolute left-[1222px] top-[360px] w-[15px] h-[497px] bg-[#fafafa]" />
      <ChatWidget />
      <Notepad />
      <NmsWindow />
      <Dialog />
      <Taskbar />
    </div>
  );
}
